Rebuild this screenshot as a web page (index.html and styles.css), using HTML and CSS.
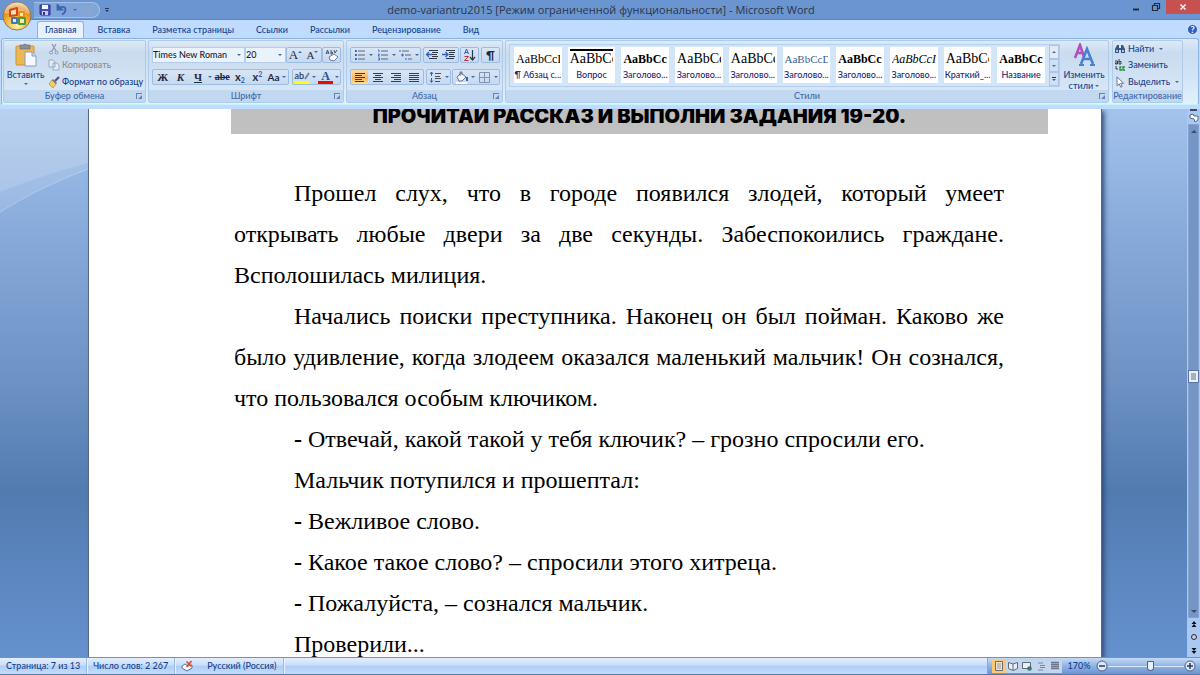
FILE: index.html
```html
<!DOCTYPE html>
<html lang="ru">
<head>
    <meta charset="UTF-8">
    <meta name="viewport" content="width=device-width, initial-scale=1.0">
    <title>demo-variantru2015 - Microsoft Word</title>
    <link rel="stylesheet" href="styles.css">
</head>
<body>
    <header class="titlebar">
        <button class="orb" aria-label="Office">
            <svg viewBox="0 0 30 30" width="30" height="30">
                <defs>
                    <radialGradient id="gold" cx="50%" cy="85%" r="85%">
                        <stop offset="0" stop-color="#fff3a0"/>
                        <stop offset="0.45" stop-color="#f5b83c"/>
                        <stop offset="0.75" stop-color="#e0861c"/>
                        <stop offset="1" stop-color="#f8dca0"/>
                    </radialGradient>
                </defs>
                <circle cx="15" cy="15" r="14" fill="url(#gold)" stroke="#8a7a6a" stroke-width="1"/>
                <path d="M2.500 13a12.500 11.500 0 0 1 25 0q-12-5-25 0z" fill="#fff" opacity=".35"/>
                <g fill="#fbe6b0" stroke-width="2" stroke-linejoin="round">
                    <path d="M8 9l7-2v7l-7 1z" stroke="#d8441c"/>
                    <path d="M17 11h5v5h-5z" stroke="#e8901c"/>
                    <path d="M10 17h5v5h-5z" stroke="#3c78c8"/>
                    <path d="M17 17h6v6h-6z" stroke="#4c9c3c"/>
                </g>
            </svg>
        </button>
        <div class="quick">
            <button aria-label="Сохранить"><svg width="12" height="12" viewBox="0 0 12 12"><path d="M1 1h10v10H2L1 10z" fill="#4a50b8" stroke="#30338c"/><path d="M3 1h6v4H3z" fill="#f4f6ff"/><path d="M3 7h6v4H3z" fill="#c4cdf0"/><path d="M4 8h2v3H4z" fill="#30338c"/></svg></button>
            <button aria-label="Отменить"><svg width="12" height="12" viewBox="0 0 12 12"><path d="M1.500 1v4.500H6zM3 4.500C5 2 9.500 2.500 9.500 5.500 9.500 8 8 9.500 6 10.500" fill="none" stroke="#3c62b4" stroke-width="1.800"/></svg></button>
            <span class="arrow"></span>
            <button aria-label="Повторить"><svg width="12" height="12" viewBox="0 0 12 12"><path d="M9 3.500A4 4 0 1 1 5 2.500M10 1v4H6" fill="none" stroke="#8fa6cb" stroke-width="1.500"/></svg></button>
        </div>
        <button class="quick-more" aria-label="Настройка панели"><span class="bar"></span><span class="arrow"></span></button>
        <h1 class="title">demo-variantru2015 [Режим ограниченной функциональности] - Microsoft Word</h1>
        <div class="window-buttons">
            <button aria-label="Свернуть"><svg width="10" height="10" viewBox="0 0 10 10"><path d="M2 7.500h6" stroke="#222c3c" stroke-width="2"/></svg></button>
            <button aria-label="Развернуть"><svg width="10" height="10" viewBox="0 0 10 10"><path d="M1.500 3.500h5v5h-5zM3.500 3V1.500h5v5H7" fill="none" stroke="#222c3c" stroke-width="1.200"/></svg></button>
            <button class="close" aria-label="Закрыть"><svg width="8" height="8" viewBox="0 0 8 8"><path d="M1.500 1.500l5 5m0-5l-5 5" stroke="#fff" stroke-width="1.400"/></svg></button>
        </div>
    </header>

    <nav class="tabs">
        <a href="#" class="active">Главная</a>
        <a href="#">Вставка</a>
        <a href="#">Разметка страницы</a>
        <a href="#">Ссылки</a>
        <a href="#">Рассылки</a>
        <a href="#">Рецензирование</a>
        <a href="#">Вид</a>
        <button class="help" aria-label="Справка">?</button>
    </nav>

    <div class="ribbon">
        <section class="group clipboard">
            <div class="group-body">
                <button class="big">
                    <svg width="22" height="24" viewBox="0 0 22 24"><rect x="1" y="3" width="18" height="19" rx="1" fill="#eeb850" stroke="#cc913a"/><path d="M5 4V2h3q2-2 4 0h3v4H5z" fill="#8a8f96" stroke="#62666e" stroke-width=".6"/><path d="M10 9h7l4 4v10H10z" fill="#f7f9fd" stroke="#8a9cbc"/><path d="M17 9v4h4" fill="#cfdaea" stroke="#8a9cbc"/></svg>
                    <span>Вставить</span>
                    <span class="arrow"></span>
                </button>
                <div class="stack">
                    <button class="row off"><svg width="12" height="12" viewBox="0 0 12 12"><path d="M4 1l4 7M8 1L4 8" stroke="#8f9bb0" stroke-width="1.300"/><circle cx="3" cy="9.500" r="1.500" fill="none" stroke="#8f9bb0"/><circle cx="8.500" cy="9.500" r="1.500" fill="none" stroke="#8f9bb0"/></svg>Вырезать</button>
                    <button class="row off"><svg width="12" height="12" viewBox="0 0 12 12"><path d="M1 1h4l2 2v5H1zM5 4h4l2 2v5H5z" fill="#e4ecf7" stroke="#99a9c4"/></svg>Копировать</button>
                    <button class="row"><svg width="12" height="12" viewBox="0 0 12 12"><path d="M11 1L7 5" stroke="#5a4a86" stroke-width="2.200"/><path d="M4 4l4 4-3 4-4-4z" fill="#f6cf58" stroke="#b98b20" stroke-width=".7"/><path d="M5 3l4 4-1 1-4-4z" fill="#6b6f8c"/></svg>Формат по образцу</button>
                </div>
            </div>
            <footer>Буфер обмена<i class="launch"></i></footer>
        </section>

        <section class="group font">
            <div class="group-body rows">
                <div class="line">
                    <div class="combos">
                        <label class="combo family"><select aria-label="Шрифт"><option>Times New Roman</option></select></label>
                        <label class="combo size"><select aria-label="Размер шрифта"><option>20</option></select></label>
                    </div>
                    <div class="set">
                        <button aria-label="Увеличить размер" class="serif grow">A<span class="arrow up"></span></button>
                        <button aria-label="Уменьшить размер" class="serif shrink">A<span class="arrow"></span></button>
                    </div>
                    <div class="set">
                        <button aria-label="Очистить формат"><svg width="14" height="13" viewBox="0 0 14 13"><path d="M4 8l5-3 4 3-4 4-4-1z" fill="#fff" stroke="#6c7c9c"/><path d="M1 5l1.500-4L4 5M1.500 4h2M6 1v4h1q2-1 0-2H6M9 1l1 3M12 1l-2 3" fill="none" stroke="#3c4658" stroke-width=".9"/></svg></button>
                    </div>
                </div>
                <div class="line">
                    <div class="set wide">
                        <button class="serif heavy">Ж</button>
                        <button class="serif heavy slant">К</button>
                        <button class="serif heavy under">Ч</button>
                        <span class="arrow"></span>
                        <button class="serif strike">abe</button>
                        <button class="heavy">x<sub>2</sub></button>
                        <button class="heavy">x<sup>2</sup></button>
                        <button class="case">Aa<span class="arrow"></span></button>
                    </div>
                    <div class="set">
                        <button aria-label="Цвет выделения" class="colour yellow">ab<svg width="6" height="8" viewBox="0 0 6 8"><path d="M5 1L1 7" stroke="#71809c" stroke-width="1.800"/></svg></button>
                        <span class="arrow"></span>
                        <button aria-label="Цвет текста" class="colour red">A</button>
                        <span class="arrow"></span>
                    </div>
                </div>
            </div>
            <footer>Шрифт<i class="launch"></i></footer>
        </section>

        <section class="group paragraph">
            <div class="group-body rows">
                <div class="line">
                    <div class="set">
                        <button aria-label="Маркеры"><svg width="12" height="12" viewBox="0 0 12 12"><path d="M4 2h7M4 6h7M4 10h7" stroke="#5c6474"/><path d="M1 2h1.800M1 6h1.800M1 10h1.800" stroke="#3460b8" stroke-width="2"/></svg></button><span class="arrow"></span>
                        <button aria-label="Нумерация"><svg width="12" height="12" viewBox="0 0 12 12"><path d="M4 2h7M4 6h7M4 10h7" stroke="#5c6474"/><path d="M1 1h1v2M1 5h1.500L1 7h2M1 9h1.500v2H1" stroke="#3460b8" fill="none" stroke-width=".9"/></svg></button><span class="arrow"></span>
                        <button aria-label="Многоуровневый список"><svg width="13" height="12" viewBox="0 0 13 12"><path d="M3 2h7M6 6h6M9 10h4" stroke="#5c6474"/><path d="M1 1v2M3 5h1v2H3zM7 9v2" stroke="#3460b8" fill="none"/></svg></button><span class="arrow"></span>
                    </div>
                    <div class="set">
                        <button aria-label="Уменьшить отступ"><svg width="14" height="12" viewBox="0 0 14 12"><path d="M4 1.500h9M7 3.500h6M7 5.500h5M7 7.500h6M4 9.500h8" stroke="#2e3748"/><path d="M7 5.500H2M4 3L1.500 5.500 4 8" stroke="#3460b8" fill="none" stroke-width="1.300"/></svg></button>
                        <button aria-label="Увеличить отступ"><svg width="14" height="12" viewBox="0 0 14 12"><path d="M4 1.500h9M7 3.500h6M7 5.500h5M7 7.500h6M4 9.500h8" stroke="#2e3748"/><path d="M0 5.500h5M3.500 3L6 5.500 3.500 8" stroke="#3460b8" fill="none" stroke-width="1.300"/></svg></button>
                    </div>
                    <div class="set">
                        <button aria-label="Сортировка"><svg width="13" height="14" viewBox="0 0 13 14"><path d="M1.500 6L3.500 1l2 5M2 4.500h3" fill="none" stroke="#3460b8"/><path d="M1.500 8.500h4l-4 4h4" fill="none" stroke="#b03444"/><path d="M9.500 2v9M7 9l2.500 3L12 9" fill="none" stroke="#2e3748" stroke-width="1.200"/></svg></button>
                    </div>
                    <div class="set">
                        <button class="pilcrow">¶</button>
                    </div>
                </div>
                <div class="line">
                    <div class="set aligns">
                        <button aria-label="По левому краю" class="on"><svg width="12" height="12" viewBox="0 0 12 12"><path d="M1 2.500h10M1 4.500h7M1 6.500h10M1 8.500h7M1 10.500h9" stroke="#3c3c44"/></svg></button>
                        <button aria-label="По центру"><svg width="12" height="12" viewBox="0 0 12 12"><path d="M1 2.500h10M3 4.500h6M1 6.500h10M3 8.500h6M1 10.500h10" stroke="#3c3c44"/></svg></button>
                        <button aria-label="По правому краю"><svg width="12" height="12" viewBox="0 0 12 12"><path d="M1 2.500h10M4 4.500h7M1 6.500h10M4 8.500h7M1 10.500h10" stroke="#3c3c44"/></svg></button>
                        <button aria-label="По ширине"><svg width="12" height="12" viewBox="0 0 12 12"><path d="M1 2.500h10M1 4.500h10M1 6.500h10M1 8.500h10M1 10.500h10" stroke="#3c3c44"/></svg></button>
                    </div>
                    <div class="set">
                        <button aria-label="Интервал"><svg width="13" height="12" viewBox="0 0 13 12"><path d="M6 2.500h6M6 5.500h5M6 7.500h6M6 10.500h5" stroke="#4a5262"/><path d="M2.500 1v4M1 3l1.500-2L4 3M2.500 7v4M1 9.500l1.500 2 1.500-2" fill="none" stroke="#3460b8"/></svg></button><span class="arrow"></span>
                    </div>
                    <div class="set">
                        <button aria-label="Заливка"><svg width="14" height="13" viewBox="0 0 14 13"><path d="M2 6l4-4 5 4-4 4H4z" fill="#f2f4f8" stroke="#66738c"/><path d="M5 5V1h2v3" fill="none" stroke="#66738c"/><path d="M12 6v4" stroke="#3460b8" stroke-width="2"/><path d="M1 11h11v2H1z" fill="#fff"/></svg></button><span class="arrow"></span>
                        <button aria-label="Границы"><svg width="11" height="11" viewBox="0 0 11 11"><path d="M.5 .5h10v10H.5zM5.500 0v11M0 5.500h11" fill="none" stroke="#8494b0"/></svg></button><span class="arrow"></span>
                    </div>
                </div>
            </div>
            <footer>Абзац<i class="launch"></i></footer>
        </section>

        <section class="group styles">
            <div class="group-body">
                <div class="gallery">
                    <button class="tile"><b class="sample s12">AaBbCcI</b><span>¶ Абзац с...</span></button>
                    <button class="tile"><b class="sample s14 over">AaBbCc</b><span>Вопрос</span></button>
                    <button class="tile"><b class="sample s12 heavy">AaBbCcI</b><span>Заголово...</span></button>
                    <button class="tile"><b class="sample s14">AaBbCc</b><span>Заголово...</span></button>
                    <button class="tile"><b class="sample s14">AaBbCc</b><span>Заголово...</span></button>
                    <button class="tile"><b class="sample s11 blue">AaBbCcD</b><span>Заголово...</span></button>
                    <button class="tile"><b class="sample s12 heavy">AaBbCcI</b><span>Заголово...</span></button>
                    <button class="tile"><b class="sample s12 slant">AaBbCcI</b><span>Заголово...</span></button>
                    <button class="tile"><b class="sample s14">AaBbCc</b><span>Краткий_...</span></button>
                    <button class="tile"><b class="sample s12 heavy">AaBbCcI</b><span>Название</span></button>
                    <div class="gallery-nav">
                        <button class="off" aria-label="Вверх"><span class="arrow up"></span></button>
                        <button aria-label="Вниз"><span class="arrow"></span></button>
                        <button aria-label="Все стили"><span class="bar"></span><span class="arrow"></span></button>
                    </div>
                </div>
                <button class="big change">
                    <svg width="24" height="24" viewBox="0 0 24 24"><path d="M3 15L8 2l4 12M5 10h6" fill="none" stroke="#b250c0" stroke-width="2.600"/><path d="M9 21l6-15 6 15M11 16h7" fill="none" stroke="#4a80d0" stroke-width="2.600"/><path d="M7 22h5M18 22h5" stroke="#4a80d0" stroke-width="2"/></svg>
                    <span class="caption">Изменить<br>стили <i class="arrow"></i></span>
                </button>
            </div>
            <footer>Стили<i class="launch"></i></footer>
        </section>

        <section class="group editing">
            <div class="group-body">
                <div class="stack">
                    <button class="row"><svg width="12" height="12" viewBox="0 0 12 12"><path d="M1 6l2-4h2v3h2V2h2l2 4v4H7V7H5v3H1z" fill="#3c5484"/><path d="M2 7h2v2H2zM8 7h2v2H8z" fill="#a9c4ec"/></svg>Найти<span class="arrow"></span></button>
                    <button class="row"><svg width="12" height="12" viewBox="0 0 12 12"><path d="M1 2h2.500v3H1.500V3.800h2M5 0v5h2V2.500H5" fill="none" stroke="#333c4c"/><path d="M7.500 8H6v3h2M11 8H9v3h2" fill="none" stroke="#258a38" stroke-width="1.300"/><path d="M2 7v3h2" fill="none" stroke="#333c4c"/></svg>Заменить</button>
                    <button class="row"><svg width="12" height="12" viewBox="0 0 12 12"><path d="M3 0.800v9l2.200-2 1.500 3.400 1.500-.7-1.500-3.200H9.500z" fill="#fff" stroke="#5b6b8a" stroke-width=".9"/></svg>Выделить<span class="arrow"></span></button>
                </div>
            </div>
            <footer>Редактирование</footer>
        </section>
    </div>

    <main class="workspace">
        <div class="desk">
            <svg class="swoosh" viewBox="0 0 88 120" width="88" height="120">
                <path d="M0 0h88v54Q40 67 0 83z" fill="#fff" opacity=".14"/>
                <path d="M0 0h88v60Q40 78 0 103z" fill="#fff" opacity=".12"/>
                <path d="M88 60Q40 78 0 103" fill="none" stroke="#fff" opacity=".25"/>
            </svg>
            <article class="paper">
                <h2>ПРОЧИТАЙ РАССКАЗ И ВЫПОЛНИ ЗАДАНИЯ 19-20.</h2>
                <p>Прошел слух, что в городе появился злодей, который умеет открывать любые двери за две секунды. Забеспокоились граждане. Всполошилась милиция.</p>
                <p>Начались поиски преступника. Наконец он был пойман. Каково же было удивление, когда злодеем оказался маленький мальчик! Он сознался, что пользовался особым ключиком.</p>
                <p><b>-</b> Отвечай, какой такой у тебя ключик? – грозно спросили его.</p>
                <p>Мальчик потупился и прошептал:</p>
                <p><b>-</b> Вежливое слово.</p>
                <p><b>-</b> Какое такое слово? – спросили этого хитреца.</p>
                <p><b>-</b> Пожалуйста, – сознался мальчик.</p>
                <p>Проверили...</p>
            </article>
        </div>
        <div class="scroll">
            <span class="split"></span>
            <button aria-label="Линейка"><svg width="10" height="10" viewBox="0 0 10 10"><path d="M1 2l3-1 1 2 4 0v4l-3 2-1-3-4-1z" fill="#fff" stroke="#566583"/></svg></button>
            <div class="track">
                <button aria-label="Прокрутить вверх"><span class="arrow up"></span></button>
                <div class="thumb"></div>
                <button aria-label="Прокрутить вниз"><span class="arrow"></span></button>
            </div>
            <button aria-label="Предыдущая страница"><svg width="8" height="13" viewBox="0 0 8 13"><path d="M1.500 6L4 3l2.500 3zM1.500 9L4 6l2.500 3z" fill="#111"/></svg></button>
            <button aria-label="Объект перехода"><svg width="8" height="13" viewBox="0 0 8 13"><circle cx="4" cy="6" r="2.500" fill="#c9cdd2" stroke="#2a2f38"/></svg></button>
            <button aria-label="Следующая страница"><svg width="8" height="13" viewBox="0 0 8 13"><path d="M1.500 4L4 7l2.500-3zM1.500 7L4 10l2.500-3z" fill="#111"/></svg></button>
        </div>
    </main>

    <footer class="status">
        <button>Страница: 7 из 13</button>
        <button>Число слов: 2 267</button>
        <button class="spell" aria-label="Правописание"><svg width="13" height="12" viewBox="0 0 13 12"><path d="M1 6l3-2 3 2 4-1v3l-5 3-5-3z" fill="#fff" stroke="#5274b4"/><path d="M5.500 1.500l5 5m0-5.500l-5 6" stroke="#e04a24" stroke-width="1.600"/></svg></button>
        <button class="lang">Русский (Россия)</button>
        <div class="view">
            <div class="modes">
                <button class="on" aria-label="Разметка страницы"><svg width="10" height="10" viewBox="0 0 10 10"><path d="M1.500 .5h7v9h-7z" fill="#e9e4d4" stroke="#6b6b70"/><path d="M3 3h4M3 5h4M3 7h4" stroke="#8a8a90" stroke-width=".8"/></svg></button>
                <button aria-label="Режим чтения"><svg width="10" height="10" viewBox="0 0 10 10"><path d="M.5 1.500L5 3l4.500-1.500v6L5 9.500.5 7.500zM5 3v6" fill="#eceff4" stroke="#5f6878"/></svg></button>
                <button aria-label="Веб-документ"><svg width="10" height="10" viewBox="0 0 10 10"><path d="M.5 1.500h8v6h-8z" fill="#eceff4" stroke="#5f6878"/><circle cx="7.500" cy="7.500" r="2.300" fill="#2f7c74"/></svg></button>
                <button aria-label="Структура"><svg width="10" height="10" viewBox="0 0 10 10"><path d="M2 2h5M4 4.500h5M4 6.500h5M2 9h5" stroke="#7c8698"/></svg></button>
                <button aria-label="Черновик"><svg width="10" height="10" viewBox="0 0 10 10"><path d="M1 1.500h8M1 3.500h8M1 5.500h8M1 7.500h8" stroke="#6c7688" stroke-width="1.400"/></svg></button>
            </div>
            <span class="percent">170%</span>
            <button class="zoom" aria-label="Уменьшить"><svg width="12" height="12" viewBox="0 0 12 12"><circle cx="6" cy="6" r="5" fill="#dce8f8" stroke="#4c6190"/><path d="M3 6h6" stroke="#2c3a58" stroke-width="1.500"/></svg></button>
            <input type="range" min="10" max="290" value="170" aria-label="Масштаб">
            <button class="zoom" aria-label="Увеличить"><svg width="12" height="12" viewBox="0 0 12 12"><circle cx="6" cy="6" r="5" fill="#dce8f8" stroke="#4c6190"/><path d="M3 6h6M6 3v6" stroke="#2c3a58" stroke-width="1.500"/></svg></button>
        </div>
    </footer>
</body>
</html>
```
FILE: styles.css
```css
* {
    box-sizing: border-box;
}
body {
    margin: 0;
    height: 100vh;
    display: flex;
    flex-direction: column;
    overflow: hidden;
    background: #bfdbff;
    color: #15428b;
    font: 500 9px/12px Lato, "Noto Sans", sans-serif;
}
button, select {
    margin: 0;
    padding: 0;
    border: none;
    background: none;
    color: inherit;
    font: inherit;
}
button {
    display: flex;
    align-items: center;
    justify-content: center;
    white-space: nowrap;
}
svg {
    display: block;
    flex: none;
}
.arrow {
    display: inline-block;
    flex: none;
    border: 2px solid transparent;
    border-top-color: #4468a4;
    border-bottom: none;
}
.arrow.up {
    border-top: none;
    border-bottom: 2px solid #4468a4;
}

/* title bar */
.titlebar {
    position: relative;
    display: flex;
    height: 20px;
    flex: none;
    background: #6b95d0;
    border-bottom: 1px solid #5c86c4;
}
.orb {
    position: absolute;
    left: 2px;
    top: 1px;
    z-index: 2;
}
.quick {
    display: flex;
    align-items: center;
    gap: 5px;
    width: 66px;
    height: 16px;
    margin: 2px 0 0 34px;
    padding-left: 5px;
    border: 1px solid #a4c0e8;
    border-left: none;
    border-radius: 0 8px 8px 0;
    background: #80a5da;
}
.quick-more {
    flex-direction: column;
    gap: 1px;
    width: 14px;
}
.bar {
    width: 4px;
    height: 1px;
    background: #24385c;
}
.quick-more .arrow {
    border-top-color: #24385c;
}
.title {
    flex: 1;
    margin: 0 38px 0 0;
    color: #2a3548;
    font: 11px/20px "Open Sans", "Noto Sans", sans-serif;
    text-align: center;
    white-space: nowrap;
}
.window-buttons {
    display: flex;
    height: 14px;
}
.window-buttons button {
    width: 20px;
}
.window-buttons .close {
    width: 34px;
    background: #c75050;
}

/* tabs */
.tabs {
    display: flex;
    flex: none;
    height: 18px;
    padding: 1px 2px 0 37px;
    background: #bfdbff;
}
.tabs a {
    padding: 0 11px;
    line-height: 17px;
    color: #15428b;
    text-decoration: none;
    white-space: nowrap;
}
.tabs .active {
    margin-right: 2px;
    padding: 0 7px;
    border: 1px solid #8db2e3;
    border-bottom: none;
    border-radius: 3px 3px 0 0;
    background: #e9f2fc;
    line-height: 16px;
}
.help {
    align-self: center;
    width: 11px;
    height: 11px;
    margin-left: auto;
    border: 1px solid #dceaff;
    border-radius: 50%;
    background: #2c5cc4;
    color: #fff;
    font-weight: bold;
}

/* ribbon */
.ribbon {
    display: flex;
    flex: none;
    gap: 2px;
    height: 67px;
    margin: 0 1px 4px;
    padding: 1px;
    border: 1px solid #8db2e3;
    border-bottom-color: #c8f4f8;
    border-radius: 3px;
    background: linear-gradient(#dfe9f5, #c9ddf3 20%, #d2e4f7 60%, #e1f2fc);
}
.group {
    display: flex;
    flex-direction: column;
    border: 1px solid #aecbea;
    border-radius: 2px;
    background: linear-gradient(#dfe9f5, #c9dbef 20%, #d6e6f6 80%);
}
.group-body {
    display: flex;
    flex: 1;
    min-height: 0;
}
.group > footer {
    display: flex;
    align-items: center;
    justify-content: center;
    position: relative;
    height: 12px;
    flex: none;
    background: #c1d8f0;
    color: #3e6aaa;
}
.launch {
    position: absolute;
    right: 3px;
    top: 3px;
    width: 6px;
    height: 6px;
    border: solid #6484b4;
    border-width: 1px 0 0 1px;
}
.launch::after {
    content: "";
    position: absolute;
    right: 0;
    bottom: 0;
    border: 2px solid #6484b4;
    border-top-color: transparent;
    border-left-color: transparent;
}
.clipboard { width: 143px; }
.font { width: 196px; }
.paragraph { width: 157px; }
.styles { flex: 1; min-width: 0; }
.editing { width: 71px; margin: 0 14px 0 1px; }

.big {
    flex-direction: column;
    justify-content: flex-start;
    width: 43px;
    padding-top: 2px;
}
.big .arrow {
    margin-top: 2px;
}
.big svg {
    margin-bottom: 2px;
}
.stack {
    display: flex;
    flex-direction: column;
    justify-content: space-around;
    padding: 0 0 0 1px;
}
.row {
    gap: 2px;
    height: 16px;
    justify-content: flex-start;
}
.row .arrow {
    margin-left: 3px;
}
.off {
    color: #8d8d8d;
}
.group-body.rows {
    flex-direction: column;
    gap: 6px;
    padding: 6px 2px 0 3px;
}
.line {
    display: flex;
    justify-content: space-between;
    height: 16px;
}
.set {
    display: flex;
    align-items: center;
    justify-content: space-around;
    gap: 2px;
    padding: 0 1px;
    border: 1px solid #9dbce2;
    border-radius: 2px;
    background: linear-gradient(#d8e6f6, #c6d9f0);
    color: #1e2c44;
}
.set button {
    height: 14px;
    min-width: 15px;
}
.set.wide {
    width: 137px;
    gap: 0;
}
.set .on {
    background: linear-gradient(#fbdcae, #f7b45c 60%, #fce29a);
}
.aligns button {
    min-width: 16px;
}
.combos {
    display: flex;
}
.combo {
    position: relative;
    border: 1px solid #b4cdeb;
    background: #eaf2fb;
}
.combo::after {
    content: "";
    position: absolute;
    right: 3px;
    top: 6px;
    border: 2px solid transparent;
    border-top-color: #4468a4;
    border-bottom: none;
}
.combo select {
    display: block;
    width: 100%;
    height: 14px;
    appearance: none;
    color: #1c1c28;
}
.family { width: 93px; }
.size { width: 41px; }
.serif {
    font-family: "Liberation Serif", serif;
}
.set .heavy { font-weight: bold; font-size: 11px; }
.slant { font-style: italic; }
.under { text-decoration: underline; }
.strike { text-decoration: line-through; font-weight: bold; font-size: 10px; }
.set .grow { font-size: 13px; }
.set .shrink { font-size: 11px; }
.grow .arrow, .shrink .arrow {
    align-self: flex-start;
}
.set .grow .arrow, .set .shrink .arrow {
    margin: 3px 0 0;
}
.set sup, .set sub {
    color: #3460b8;
    font-size: 7px;
    line-height: 7px;
}
.set sup { align-self: flex-start; margin-top: 1px; }
.set sub { align-self: flex-end; }
.set .case {
    font-size: 10px;
    font-weight: bold;
}
.set button .arrow {
    margin-left: 2px;
}
.colour {
    border-bottom: 3px solid #ff0;
    line-height: 9px;
}
.set .yellow {
    border-bottom: 3px solid #ff0;
}
.set .red {
    border-bottom: 3px solid #f00;
    color: #2c5098;
    font: bold 12px/10px "Liberation Serif", serif;
}
.pilcrow {
    font-size: 12px;
    font-weight: bold;
}

/* styles gallery */
.gallery {
    display: flex;
    flex: 1;
    min-width: 0;
    justify-content: space-between;
    gap: 6px;
    margin: 3px 0 3px 3px;
    padding-left: 4px;
    border: 1px solid #b4cfee;
    background: #d3e5f9;
}
.tile {
    flex: 1;
    flex-direction: column;
    min-width: 0;
    height: 36px;
    margin-top: 2px;
    padding: 2px;
    background: #fff;
    color: #1e1e78;
}
.sample {
    width: 100%;
    height: 20px;
    overflow: hidden;
    color: #000;
    font-family: "Liberation Serif", serif;
    font-weight: normal;
    line-height: 20px;
    text-align: left;
}
.s11 { font-size: 11px; }
.s12 { font-size: 12px; }
.s14 { font-size: 14px; }
.sample.heavy { font-weight: bold; }
.over { border-top: 2px solid #000; line-height: 16px; }
.blue { color: #365f91; }
.gallery-nav {
    display: flex;
    flex-direction: column;
    width: 10px;
    margin-left: -2px;
}
.gallery-nav button {
    flex: 1;
    flex-direction: column;
    gap: 1px;
    border: 1px solid #a9c5e8;
    background: #cfe0f5;
}
.gallery-nav .off {
    background: #e6e9ee;
}
.big.change {
    width: 46px;
    margin: 0 1px;
}
.caption {
    line-height: 11px;
}
.big .caption .arrow {
    margin: 0 0 2px;
}

/* document */
.workspace {
    display: flex;
    flex: 1;
    min-height: 0;
}
.desk {
    position: relative;
    flex: 1;
    padding: 0 86px 0 89px;
    overflow: hidden;
    background: linear-gradient(#a3c3ec, #86a9da 24%, #6d91c3 50%, #527bb0 70%, #6591ce);
}
.swoosh {
    position: absolute;
    left: 0;
    top: 0;
}
.paper {
    height: 100%;
    padding: 0 53px 0 142px;
    overflow: hidden;
    background: #fff;
    color: #000;
    box-shadow: 0 0 0 1px #56688a, 3px 2px 5px #2c4876;
    font: 24px/41px "Liberation Serif", serif;
}
.paper h2 {
    height: 25px;
    margin: 0 0 39px;
    overflow: hidden;
    background: #c0c0c0;
    font: 900 20px/14px Inter, sans-serif;
    text-align: center;
}
.paper p {
    margin: 0;
    padding: 0 44px 0 3px;
    text-align: justify;
    text-indent: 60px;
}

/* scroll bar */
.scroll {
    display: flex;
    flex-direction: column;
    align-items: center;
    width: 13px;
    background: #a9c8f2;
}
.split {
    width: 7px;
    height: 2px;
    background: #3b4c6c;
}
.scroll > button {
    height: 13px;
}
.track {
    display: flex;
    flex: 1;
    flex-direction: column;
    align-items: center;
    justify-content: space-between;
    width: 11px;
    border: 1px solid #85a3cf;
    background: #7595c6;
}
.track button {
    height: 12px;
}
.track .arrow {
    border-width: 3px;
    border-top-color: #3c4a72;
    border-bottom-width: 0;
}
.track .arrow.up {
    border-top: none;
    border-bottom: 3px solid #3c4a72;
}
.thumb {
    width: 9px;
    height: 11px;
    margin-top: 10px;
    border: 2px solid #e8eef8;
    outline: 1px solid #5b75a4;
    background: #a4b0c2;
}

/* status bar */
.status {
    display: flex;
    align-items: center;
    flex: none;
    height: 18px;
    border-top: 1px solid #6a93cc;
    border-bottom: 1px solid #5678ac;
    background: linear-gradient(#e3eefd, #c9defa 45%, #aecdf6 50%, #c4dcfa);
}
.status > button {
    height: 16px;
    padding: 0 6px;
    border-right: 1px solid #9cbce6;
    box-shadow: 1px 0 #e6f1ff;
}
.status > .spell {
    border: none;
    box-shadow: none;
}
.status > .lang {
    padding: 0 7px;
}
.view {
    display: flex;
    align-items: center;
    height: 16px;
    margin-left: auto;
    padding: 0 4px;
    border-left: 1px solid #88a9d8;
    background: linear-gradient(#c3daf7, #90b3e4 50%, #6c94d0);
}
.modes {
    display: flex;
    height: 13px;
    background: #c4d5ee;
}
.modes button {
    width: 14px;
}
.modes .on {
    background: #fbc873;
}
.percent {
    width: 34px;
    text-align: center;
}
.zoom {
    width: 12px;
}
input[type=range] {
    width: 76px;
    height: 14px;
    margin: 0;
    appearance: none;
    background: linear-gradient(#dce9fb, #dce9fb) center / 100% 1px no-repeat;
}
input[type=range]::-webkit-slider-thumb {
    appearance: none;
    width: 7px;
    height: 10px;
    border: 1px solid #4c6190;
    border-radius: 1px 1px 4px 4px;
    background: #e8f0fb;
}
```
